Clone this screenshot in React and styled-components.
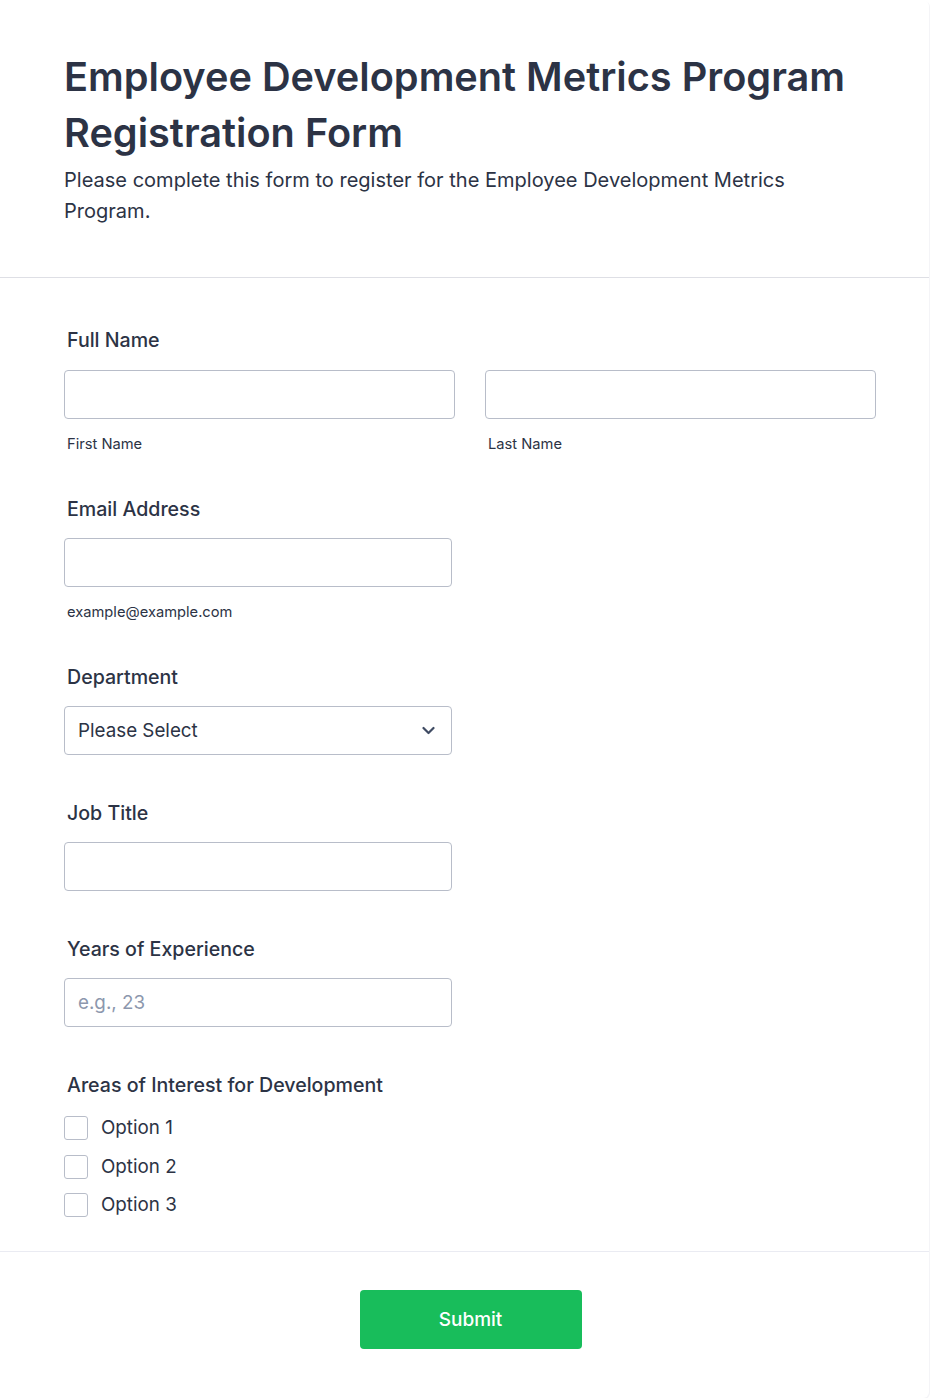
import React from 'react'
import styled, { createGlobalStyle } from 'styled-components'

const GlobalStyle = createGlobalStyle`
  html, body {
    margin: 0;
    padding: 0;
    background: #ffffff;
  }
  body {
    font-family: Inter, "Noto Sans", "Liberation Sans", sans-serif;
    color: #2c3345;
  }
  * {
    box-sizing: border-box;
  }
`

const Card = styled.div`
  width: 929px;
  min-height: 1398px;
  background: #fff;
  border-radius: 0 6px 6px 0;
  box-shadow: 1px 1px 0 #f4f4f7;
  display: flex;
  flex-direction: column;
`

const Header = styled.header`
  padding: 49px 64px 50px 64px;
  border-bottom: 1px solid #dedfe5;
`

const Title = styled.h1`
  margin: 0;
  font-size: 39.7px;
  line-height: 56px;
  font-weight: 600;
  color: #2c3345;
`

const Description = styled.p`
  margin: 4px 0 0;
  font-size: 20.05px;
  line-height: 31px;
  color: #2c3345;
  max-width: 760px;
`

const Body = styled.section`
  padding: 48px 54px 34px 64px;
  display: flex;
  flex-direction: column;
`

const Field = styled.div`
  display: flex;
  flex-direction: column;
  padding-bottom: ${(p) => p.$after ?? 44}px;
`

const Label = styled.label`
  font-size: 19.6px;
  line-height: 28px;
  font-weight: 500;
  color: #2c3345;
  padding-left: 3px;
  margin-bottom: ${(p) => p.$gap ?? 15}px;
`

const Row = styled.div`
  display: grid;
  grid-template-columns: 391px 391px;
  column-gap: 30px;
`

const Col = styled.div`
  display: flex;
  flex-direction: column;
`

const Input = styled.input`
  width: ${(p) => p.$width ?? 388}px;
  height: 49px;
  border: 1px solid #b8bdc9;
  border-radius: 4px;
  padding: 0 13px;
  font-family: inherit;
  font-size: 18.8px;
  color: #2c3345;
  background: #fff;
  outline: none;

  &::placeholder {
    color: #8c97ad;
  }
`

const SubLabel = styled.span`
  margin-top: 15px;
  font-size: 14.7px;
  line-height: 20px;
  color: #2c3345;
  padding-left: 3px;
`

const SelectBox = styled.div`
  width: 388px;
  height: 49px;
  border: 1px solid #b8bdc9;
  border-radius: 4px;
  padding: 0 16px 0 13px;
  display: flex;
  align-items: center;
  justify-content: space-between;
  font-size: 18.8px;
  color: #2c3345;
`

const Options = styled.div`
  display: flex;
  flex-direction: column;
  gap: 14.5px;
`

const OptionRow = styled.label`
  display: flex;
  align-items: center;
  gap: 13px;
  font-size: 18.8px;
  line-height: 24px;
  color: #2c3345;
`

const Box = styled.span`
  width: 24px;
  height: 24px;
  border: 1px solid #b8bdc9;
  border-radius: 3px;
  background: #fff;
  flex: none;
`

const Footer = styled.footer`
  border-top: 1px solid #eaebf2;
  padding: 38px 0 48px;
  display: flex;
  justify-content: center;
`

const SubmitButton = styled.button`
  width: 222px;
  height: 59px;
  margin-left: 12px;
  border: none;
  border-radius: 4px;
  background: #18bd5b;
  color: #fff;
  font-family: inherit;
  font-size: 19px;
  font-weight: 500;
  cursor: pointer;
`

const Chevron = () => (
  <svg width="13" height="9" viewBox="0 0 13 9" fill="none">
    <path d="M1.5 2 L6.5 7 L11.5 2" stroke="#3f4b63" strokeWidth="2.2" strokeLinecap="round" strokeLinejoin="round" />
  </svg>
)

const options = ['Option 1', 'Option 2', 'Option 3']

export default function App() {
  return (
    <>
      <GlobalStyle />
      <Card>
        <Header>
          <Title>Employee Development Metrics Program Registration Form</Title>
          <Description>
            Please complete this form to register for the Employee Development Metrics Program.
          </Description>
        </Header>
        <Body>
          <Field $after={41}>
            <Label $gap={16}>Full Name</Label>
            <Row>
              <Col>
                <Input $width={391} />
                <SubLabel>First Name</SubLabel>
              </Col>
              <Col>
                <Input $width={391} />
                <SubLabel>Last Name</SubLabel>
              </Col>
            </Row>
          </Field>
          <Field $after={41}>
            <Label>Email Address</Label>
            <Input type="email" />
            <SubLabel>example@example.com</SubLabel>
          </Field>
          <Field>
            <Label>Department</Label>
            <SelectBox>
              <span>Please Select</span>
              <Chevron />
            </SelectBox>
          </Field>
          <Field>
            <Label>Job Title</Label>
            <Input />
          </Field>
          <Field>
            <Label>Years of Experience</Label>
            <Input placeholder="e.g., 23" />
          </Field>
          <Field $after={0}>
            <Label $gap={17}>Areas of Interest for Development</Label>
            <Options>
              {options.map((o) => (
                <OptionRow key={o}>
                  <Box />
                  {o}
                </OptionRow>
              ))}
            </Options>
          </Field>
        </Body>
        <Footer>
          <SubmitButton>Submit</SubmitButton>
        </Footer>
      </Card>
    </>
  )
}
